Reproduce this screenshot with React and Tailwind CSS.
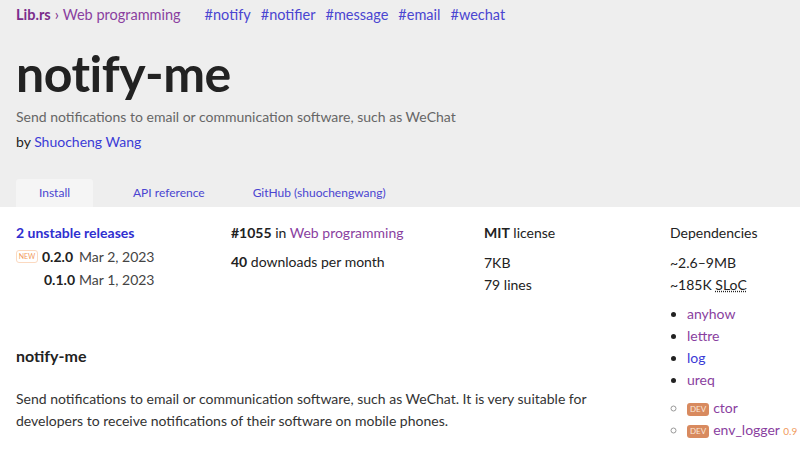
import React from 'react';

const tags = ['notify', 'notifier', 'message', 'email', 'wechat'];

const deps = [
  { name: 'anyhow', color: 'text-[#8a3fa0]' },
  { name: 'lettre', color: 'text-[#8a3fa0]' },
  { name: 'log', color: 'text-[#3b3bd6]' },
  { name: 'ureq', color: 'text-[#8a3fa0]' },
];

const Dev = () => (
  <span className="inline-flex items-center rounded-[3px] bg-[#d88a5f] px-[3px] h-[13px] text-[8px] leading-none text-[#fbe9dc] mr-[4px] align-[1px]">
    DEV
  </span>
);

export default function App() {
  return (
    <div className="min-h-screen bg-white text-[#222] text-[14px]" style={{ fontFamily: 'Lato, "Open Sans", sans-serif' }}>
      {/* header */}
      <div className="bg-[#eeeeee] px-4 pt-[5px]">
        <nav className="flex items-center text-[14.5px] leading-[20px]">
          <a className="font-bold text-[#7b2d8b]">Lib.rs</a>
          <span className="mx-[4px] text-[#7b2d8b]">›</span>
          <a className="text-[#8a3fa0]">Web programming</a>
          <div className="ml-[24px] flex gap-[10px] text-[#4a45d1]">
            {tags.map(t => (
              <a key={t}>#{t}</a>
            ))}
          </div>
        </nav>
        <h1 className="mt-[20px] text-[50px] leading-[56px] font-bold tracking-[-0.5px] text-[#222]">notify-me</h1>
        <p className="mt-[6px] leading-[20px] text-[#666]">
          Send notifications to email or communication software, such as WeChat
        </p>
        <p className="mt-[5px] leading-[20px]">
          by <a className="text-[#3b3bd6]">Shuocheng Wang</a>
        </p>
        <div className="mt-[27px] flex text-[12px] text-[#4a45d1]">
          <a className="w-[77px] h-[28px] flex items-center justify-center rounded-t-[3px] bg-[#f5f5f5]">Install</a>
          <a className="ml-[40px] h-[28px] flex items-center">API reference</a>
          <a className="ml-[48px] h-[28px] flex items-center">GitHub (shuochengwang)</a>
        </div>
      </div>

      {/* body */}
      <div className="flex px-4 pt-[16px]">
        <div className="w-[654px]">
          <div className="flex">
            <div className="w-[215px]">
              <h3 className="leading-[20px] font-bold text-[#2f2fd0]">2 unstable releases</h3>
              <div className="mt-[2px] flex items-center leading-[23px]">
                <span className="inline-flex items-center justify-center w-[22px] h-[13px] rounded-[3px] border border-[#fbd9c0] text-[7px] text-[#f19a5c] mr-[4px]">NEW</span>
                <b className="w-[31px]">0.2.0</b>
                <span className="ml-[6px] text-[#444]">Mar 2, 2023</span>
              </div>
              <div className="flex items-center leading-[23px]">
                <b className="ml-[28px] w-[29px]">0.1.0</b>
                <span className="ml-[6px] text-[#444]">Mar 1, 2023</span>
              </div>
            </div>
            <div className="w-[253px] leading-[20px]">
              <p><b>#1055</b> in <a className="text-[#8a3fa0]">Web programming</a></p>
              <p className="mt-[9px]"><b>40</b> downloads per month</p>
            </div>
            <div className="w-[186px] leading-[20px]">
              <p><b>MIT</b> license</p>
              <p className="mt-[9px] leading-[22px]">7KB</p>
              <p className="leading-[22px]">79 lines</p>
            </div>
          </div>

          <h2 className="mt-[49px] text-[16px] leading-[22px] font-bold">notify-me</h2>
          <p className="mt-[21px] max-w-[615px] leading-[22px] text-[#333]">
            Send notifications to email or communication software, such as WeChat. It is very suitable for developers to receive notifications of their software on mobile phones.
          </p>
        </div>

        <aside className="flex-1 leading-[20px] whitespace-nowrap">
          <h3>Dependencies</h3>
          <p className="mt-[9px] leading-[22px]">~2.6–9MB</p>
          <p className="leading-[22px]">
            ~185K <abbr className="underline decoration-dotted">SLoC</abbr>
          </p>
          <ul className="mt-[7px] pl-[17px] list-disc marker:text-[#222]">
            {deps.map(d => (
              <li key={d.name} className={`leading-[22px] ${d.color}`}>{d.name}</li>
            ))}
          </ul>
          <ul className="mt-[6px] pl-[17px] list-[circle] marker:text-[#999]">
            <li className="leading-[22px] text-[#8a3fa0]"><Dev />ctor</li>
            <li className="leading-[22px] text-[#8a3fa0]">
              <Dev />env_logger <span className="text-[10px] text-[#f19a5c]">0.9</span>
            </li>
          </ul>
        </aside>
      </div>
    </div>
  );
}
